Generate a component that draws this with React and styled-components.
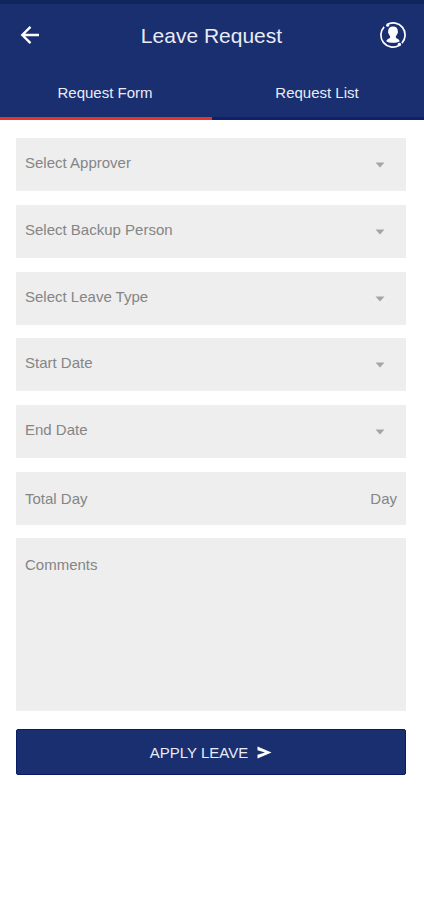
import React from "react";
import styled, { createGlobalStyle } from "styled-components";

const navy = "#1a2f70";

const GlobalStyle = createGlobalStyle`
  *, *::before, *::after { box-sizing: border-box; }
  body {
    margin: 0;
    background: #fff;
    font-family: "Liberation Sans", Arial, sans-serif;
  }
  button, input, select, textarea { font: inherit; }
`;

const Header = styled.header`
  background: ${navy};
  border-top: 4px solid #10265a;
  color: #e9ecf6;
`;

const TopBar = styled.div`
  display: grid;
  grid-template-columns: 28px 1fr 28px;
  align-items: center;
  height: 62px;
  padding: 0 17px 0 16px;
`;

const Title = styled.h1`
  margin: 0;
  padding-top: 2px;
  font-size: 21px;
  line-height: 28px;
  font-weight: 400;
  text-align: center;
`;

const IconButton = styled.button`
  display: grid;
  place-items: center;
  width: 28px;
  height: 28px;
  padding: 0;
  border: 0;
  background: none;
  color: #fff;
  cursor: pointer;
`;

const Tabs = styled.div`
  display: grid;
  grid-template-columns: 1fr 1fr;
`;

const Tab = styled.button`
  height: 54px;
  padding: 2px 2px 0 0;
  border: 0;
  border-bottom: 3px solid ${(p) => (p.$active ? "#e5352b" : "#12206a")};
  background: none;
  color: inherit;
  font-size: 15px;
  line-height: 20px;
  cursor: pointer;
`;

const Form = styled.form`
  display: flex;
  flex-direction: column;
  gap: 13px;
  padding: 18px 18px 24px 16px;
`;

const FieldGroup = styled.div`
  display: flex;
  flex-direction: column;
  gap: 14px;
`;

const Field = styled.label`
  display: flex;
  align-items: center;
  height: 53px;
  background: #eee;
  color: #858585;
  font-size: 15px;
  line-height: 20px;
`;

const SelectField = styled(Field)`
  display: grid;
  align-items: stretch;

  & > * { grid-area: 1 / 1; }
  & > svg {
    align-self: center;
    justify-self: end;
    margin-right: 21px;
    pointer-events: none;
  }
`;

const Select = styled.select`
  appearance: none;
  width: 100%;
  padding: 0 44px 3px 9px;
  border: 0;
  border-radius: 0;
  background: none;
  color: inherit;
`;

const Input = styled.input`
  flex: 1;
  min-width: 0;
  height: 100%;
  padding: 0 9px;
  border: 0;
  background: none;
  color: inherit;

  &::placeholder { color: inherit; opacity: 1; }
`;

const Unit = styled.span`
  padding-right: 9px;
`;

const Comments = styled.textarea`
  display: block;
  width: 100%;
  height: 173px;
  padding: 17px 9px;
  border: 0;
  border-radius: 0;
  background: #eee;
  color: #858585;
  font-size: 15px;
  line-height: 20px;
  resize: none;

  &::placeholder { color: inherit; opacity: 1; }
`;

const SubmitButton = styled.button`
  display: flex;
  align-items: center;
  justify-content: center;
  gap: 9px;
  height: 46px;
  margin-top: 5px;
  padding: 1px 0 0;
  border: 1px solid #0c1b66;
  border-radius: 2px;
  background: ${navy};
  color: #e9ecf6;
  font-size: 15px;
  line-height: 20px;
  cursor: pointer;
`;

function BackIcon() {
  return (
    <svg width="20" height="20" viewBox="0 0 20 20" fill="none" stroke="currentColor" strokeWidth="2.4" aria-hidden="true">
      <path d="M19 10H2.5M10.5 1.8 2.3 10l8.2 8.2" />
    </svg>
  );
}

function ProfileIcon() {
  return (
    <svg width="28" height="28" viewBox="0 0 28 28" fill="none" aria-hidden="true">
      <g stroke="currentColor" strokeWidth="1.7">
        <path d="M8 3.600A12 12 0 0 1 22.900 22.100" />
        <path d="M20 24.400A12 12 0 0 1 5.100 5.900" />
      </g>
      <circle cx="8.600" cy="4.300" r="1.500" fill="currentColor" />
      <circle cx="20.400" cy="23.500" r="1.700" fill="currentColor" />
      <path
        fill="currentColor"
        d="M14 5.500c3.200 0 4.900 1.800 4.800 4.600 0 .6.300 1 .1 1.600-.1.600-.6.800-.7 1.300-.3 1.200-1.400 1.800-1.400 3.300 0 1.400 3.500 1.400 3.900 4-1.700 1-4 1.500-6.700 1.500s-5-.5-6.700-1.500c.4-2.600 3.900-2.600 3.900-4 0-1.500-1.100-2.100-1.400-3.300-.1-.5-.6-.7-.7-1.300-.2-.6.1-1 .1-1.600C9.100 7.300 10.800 5.500 14 5.500z"
      />
    </svg>
  );
}

function CaretIcon() {
  return (
    <svg width="10" height="6" viewBox="0 0 10 6" aria-hidden="true">
      <path d="M0.500 0.500h9L5 5.500z" fill="#a2a5a7" />
    </svg>
  );
}

function SendIcon() {
  return (
    <svg width="15" height="13" viewBox="0 0 15 13" aria-hidden="true">
      <path d="M.5.5 14.500 6.500.5 12.500V8.700L8 6.500.5 4.300z" fill="#fff" />
    </svg>
  );
}

function SelectRow({ label }) {
  return (
    <SelectField>
      <Select aria-label={label} defaultValue="">
        <option value="">{label}</option>
      </Select>
      <CaretIcon />
    </SelectField>
  );
}

export default function App() {
  const [tab, setTab] = React.useState("form");

  return (
    <>
      <GlobalStyle />
      <Header>
        <TopBar>
          <IconButton type="button" aria-label="Back">
            <BackIcon />
          </IconButton>
          <Title>Leave Request</Title>
          <IconButton type="button" aria-label="Profile">
            <ProfileIcon />
          </IconButton>
        </TopBar>
        <Tabs role="tablist">
          <Tab type="button" role="tab" aria-selected={tab === "form"} $active={tab === "form"} onClick={() => setTab("form")}>
            Request Form
          </Tab>
          <Tab type="button" role="tab" aria-selected={tab === "list"} $active={tab === "list"} onClick={() => setTab("list")}>
            Request List
          </Tab>
        </Tabs>
      </Header>
      <main>
        <Form onSubmit={(e) => e.preventDefault()}>
          <FieldGroup>
            <SelectRow label="Select Approver" />
            <SelectRow label="Select Backup Person" />
            <SelectRow label="Select Leave Type" />
          </FieldGroup>
          <FieldGroup>
            <SelectRow label="Start Date" />
            <SelectRow label="End Date" />
            <Field>
              <Input aria-label="Total Day" placeholder="Total Day" inputMode="numeric" />
              <Unit>Day</Unit>
            </Field>
          </FieldGroup>
          <Comments aria-label="Comments" placeholder="Comments" />
          <SubmitButton type="submit">
            APPLY LEAVE
            <SendIcon />
          </SubmitButton>
        </Form>
      </main>
    </>
  );
}
